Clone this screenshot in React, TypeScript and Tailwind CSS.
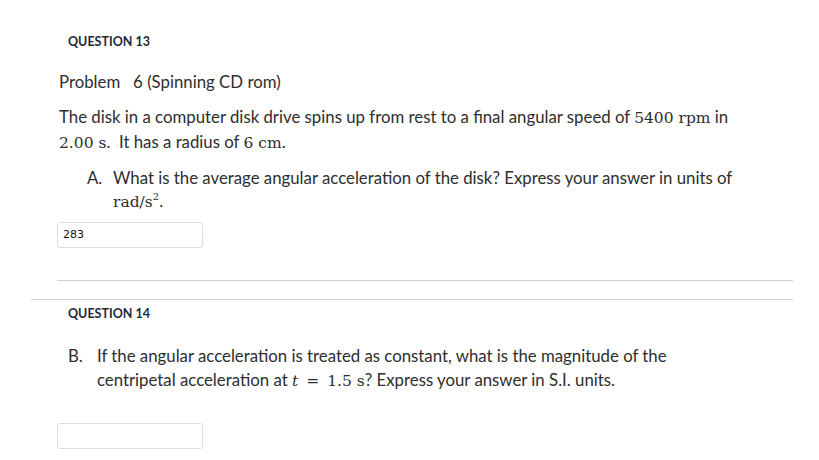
const sans = "font-['Lato','Open_Sans',sans-serif]";
const math = "font-['DejaVu_Serif',serif] text-[15.5px] leading-none";

function Answer({ value }: { value?: string }) {
    return (
        <div className="ml-[57px] flex h-[26px] w-[146px] items-center rounded-[3px] border border-[#dedede] bg-white px-[5px]">
            <span className="font-['DejaVu_Sans',sans-serif] text-[11px] text-[#111]">{value}</span>
        </div>
    );
}

export default function App() {
    return (
        <main className={`h-[460px] w-[819px] overflow-hidden bg-white text-[#2e2e2e] ${sans}`}>
            <div className="pt-[34px]">
                <h2 className="ml-[68px] text-[12.5px] leading-[16px] font-bold text-[#1e2a38]">QUESTION 13</h2>
                <p className="mt-[20px] ml-[59px] text-[16.8px] leading-[24px]">
                    Problem&nbsp;&nbsp;&nbsp;6 (Spinning CD rom)
                </p>
                <p className="mt-[10px] ml-[59px] text-[16.8px] leading-[25px]">
                    <span className="block">
                        The disk in a computer disk drive spins up from rest to a final angular speed of{" "}
                        <span className={math}>5400 rpm</span> in
                    </span>
                    <span className="block">
                        <span className={math}>2.00 s</span>.&nbsp; It has a radius of <span className={math}>6 cm</span>.
                    </span>
                </p>
                <div className="mt-[12px] flex text-[16.8px] leading-[23px]">
                    <span className="ml-[87px] w-[26px]">A.</span>
                    <div>
                        <span className="block">
                            What is the average angular acceleration of the disk? Express your answer in units of
                        </span>
                        <span className="block">
                            <span className={math}>
                                rad/s<span className="relative -top-[7px] text-[10px]">2</span>
                            </span>
                            .
                        </span>
                    </div>
                </div>
                <div className="mt-[10px]">
                    <Answer value="283" />
                </div>
                <div className="mt-[32px] ml-[57px] mr-[26px] border-t border-[#cfcfcf]" />
                <div className="mt-[18px] ml-[31px] mr-[26px] border-t border-[#cfcfcf]" />
                <h2 className="mt-[6px] ml-[68px] text-[12.5px] leading-[16px] font-bold text-[#1e2a38]">QUESTION 14</h2>
                <div className="mt-[22px] flex text-[16.8px] leading-[24px]">
                    <span className="ml-[68px] w-[29px]">B.</span>
                    <div>
                        <span className="block">
                            If the angular acceleration is treated as constant, what is the magnitude of the
                        </span>
                        <span className="block">
                            centripetal acceleration at <span className={`${math} italic`}>t</span>
                            <span className={math}>&thinsp; = &thinsp;1.5 s</span>? Express your answer in S.I. units.
                        </span>
                    </div>
                </div>
                <div className="mt-[31px]">
                    <Answer />
                </div>
            </div>
        </main>
    );
}
